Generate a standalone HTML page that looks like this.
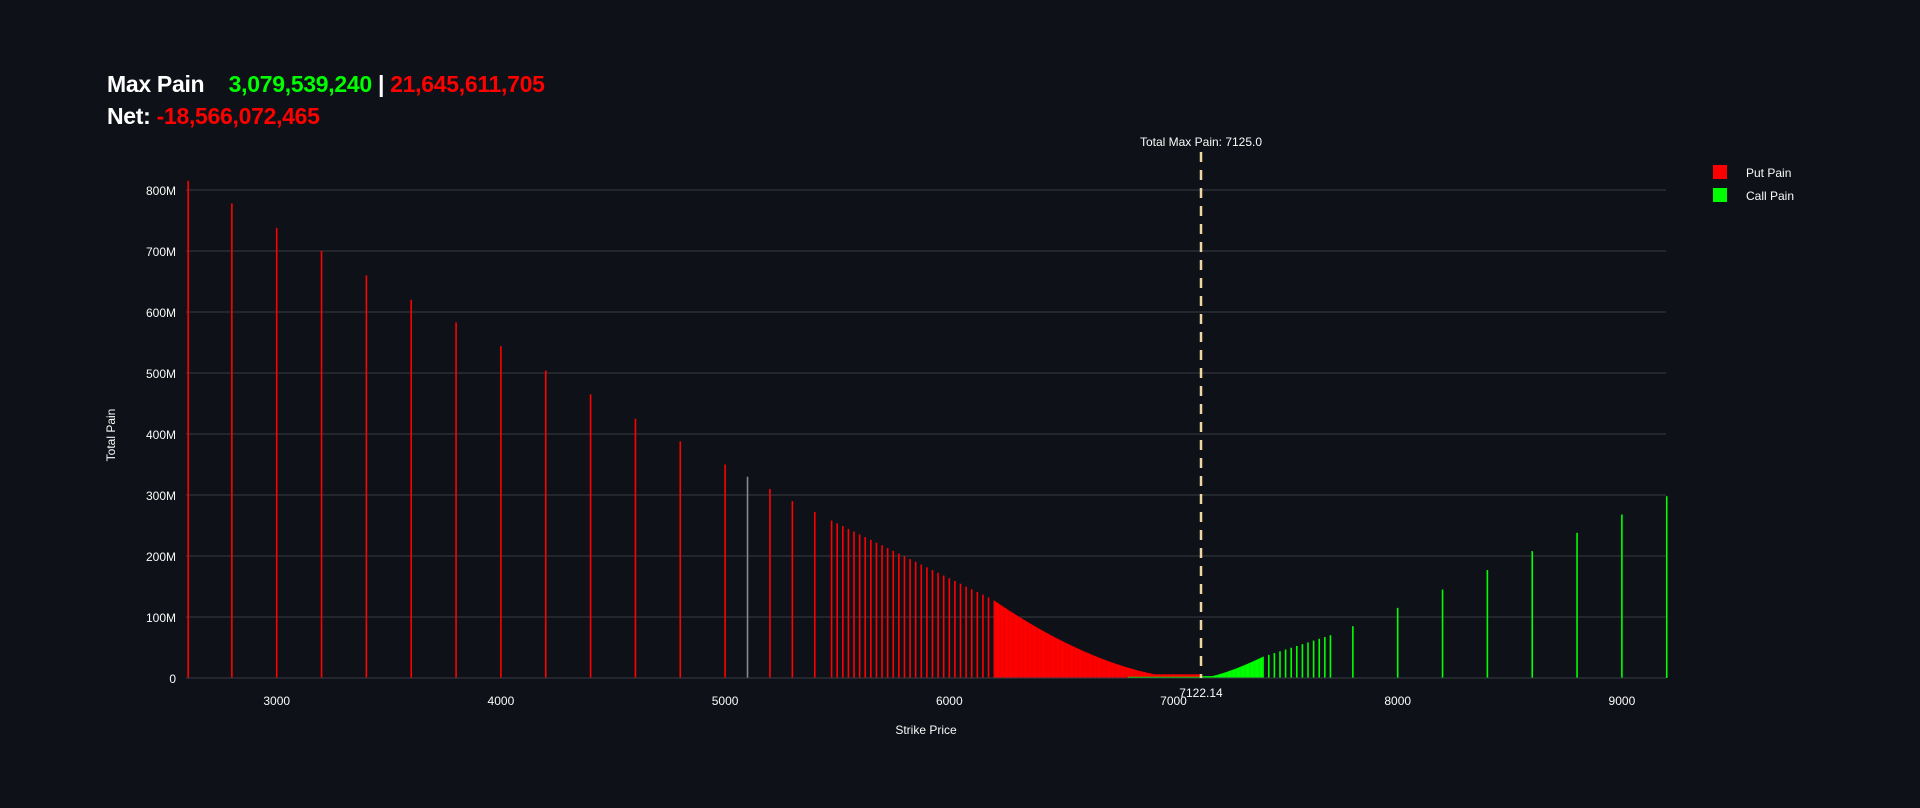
<!DOCTYPE html>
<html><head><meta charset="utf-8"><style>
html,body{margin:0;padding:0;background:#0e1117;}
body{width:1920px;height:808px;overflow:hidden;position:relative;font-family:"Liberation Sans",sans-serif;}
.h{position:absolute;left:107px;font-weight:bold;font-size:23px;color:#fff;white-space:pre;letter-spacing:-0.3px;}
</style></head><body>
<div class="h" style="top:71px">Max Pain    <span style="color:#00ff00">3,079,539,240</span> | <span style="color:#ff0000">21,645,611,705</span></div>
<div class="h" style="top:103px">Net: <span style="color:#ff0000">-18,566,072,465</span></div>
<svg id="s" width="1920" height="808" style="position:absolute;left:0;top:0" font-family="Liberation Sans, sans-serif"></svg>
<script>
var s=document.getElementById('s'),o='';
var X=function(k){return 276.7+(k-3000)*0.2242},Y=function(v){return 678-v*0.61};
for(var i=1;i<=8;i++){var y=Y(i*100);o+='<line x1="186" x2="1666" y1="'+y+'" y2="'+y+'" stroke="#3a3c44" stroke-width="1"/>';
o+='<text x="176" y="'+(y+5)+'" fill="#fafafa" font-size="12" text-anchor="end">'+i*100+'M</text>';}
o+='<text x="176" y="683" fill="#fafafa" font-size="12" text-anchor="end">0</text>';
function bar(k,v,c,w){w=w||1.6;o+='<rect x="'+(X(k)-w/2)+'" y="'+Y(v)+'" width="'+w+'" height="'+(678-Y(v))+'" fill="'+c+'"/>';}
var R='#ff0000',G='#00ff00';
var ph={2800:778,3000:738,3200:700,3400:660,3600:620,3800:583,4000:544,4200:504,4400:465,4600:425,4800:388,5000:350,5100:330,5200:310,5300:290,5400:272};
for(var k in ph)bar(+k,ph[k],k==5100?'#888':R);
bar(2605,815,R);
for(var k=5475;k<6200;k+=25)bar(k,258-(k-5475)*0.18,R);
for(var k=6200;k<=7120;k+=5){var t=Math.max(0,(7060-k)/860);bar(k,Math.max(6,127*Math.pow(t,1.7)),R,1.3);}
for(var k=6800;k<=7120;k+=5)bar(k,2,G,1.3);
for(var k=7125;k<=7400;k+=5){var t=(k-7125)/275;bar(k,Math.max(3,35*Math.pow(t,1.4)),G,1.3);}
for(var k=7425;k<=7700;k+=25)bar(k,35+(k-7400)*0.117,G);
var ch={7800:85,8000:115,8200:145,8400:177,8600:208,8800:238,9000:268,9200:298};
for(var k in ch)bar(+k,ch[k],G);
o+='<line x1="186" x2="1666" y1="678" y2="678" stroke="#3a3c44"/>';
o+='<line x1="1201" x2="1201" y1="152" y2="678" stroke="#f0d9a0" stroke-width="2.5" stroke-dasharray="10,8"/>';
o+='<text x="1201" y="146" fill="#fafafa" font-size="12" text-anchor="middle">Total Max Pain: 7125.0</text>';
o+='<text x="1201" y="697" fill="#fafafa" font-size="12" text-anchor="middle">7122.14</text>';
for(var k=3000;k<=9000;k+=1000)o+='<text x="'+X(k)+'" y="705" fill="#fafafa" font-size="12" text-anchor="middle">'+k+'</text>';
o+='<text x="926" y="734" fill="#fafafa" font-size="12" text-anchor="middle">Strike Price</text>';
o+='<text transform="translate(115,435) rotate(-90)" fill="#fafafa" font-size="12" text-anchor="middle">Total Pain</text>';
o+='<rect x="1713" y="165" width="14" height="14" fill="#ff0000"/><text x="1746" y="177" fill="#fafafa" font-size="12">Put Pain</text>';
o+='<rect x="1713" y="188" width="14" height="14" fill="#00ff00"/><text x="1746" y="200" fill="#fafafa" font-size="12">Call Pain</text>';
s.innerHTML=o;
</script>
</body></html>
